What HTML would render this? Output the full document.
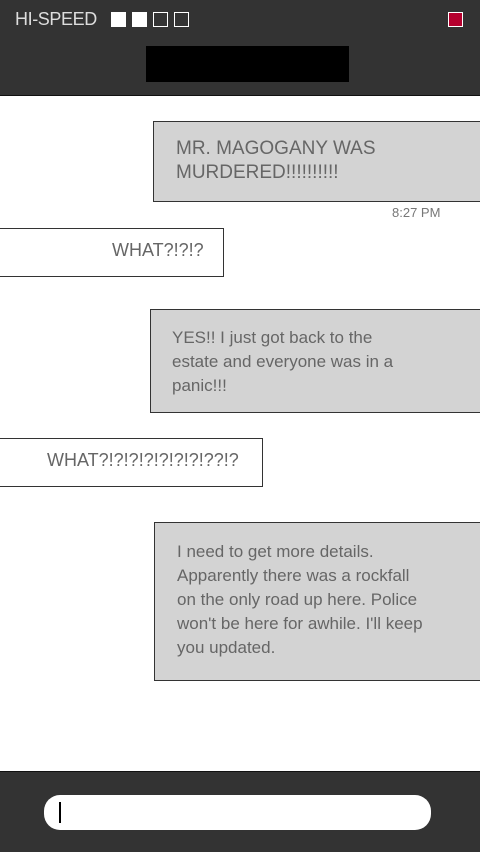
<!DOCTYPE html>
<html><head><style>
*{margin:0;padding:0;box-sizing:border-box}
body{width:480px;height:852px;background:#fff;position:relative;overflow:hidden;font-family:"Liberation Sans",sans-serif;color:#555}
.hdr{position:absolute;left:0;top:0;width:480px;height:96px;background:#333;border-bottom:1px solid #111}
.t{position:absolute;left:15px;top:9px;color:#ddd;font-size:18px;font-weight:normal;letter-spacing:-0.4px}
.sq{position:absolute;top:12px;width:15px;height:15px;border:1px solid #fff}
.f{background:#fff}
.red{position:absolute;left:448px;top:12px;width:15px;height:15px;background:#b5002e;border:1px solid #fff}
.blk{position:absolute;left:146px;top:46px;width:203px;height:36px;background:#000}
.b{position:absolute;border:1px solid #333;font-size:17px;line-height:24px;color:#666}
.g{background:#d3d3d3}
.w{background:#fff}
.ts{position:absolute;left:392px;top:205px;font-size:13px;color:#777}
.ftr{position:absolute;left:0;top:771px;width:480px;height:81px;background:#333;border-top:1px solid #111}
.in{position:absolute;left:44px;top:23px;width:387px;height:35px;background:#fff;border-radius:16px}
.cur{position:absolute;left:15px;top:7px;width:2px;height:21px;background:#000}
</style></head><body>
<div class="hdr">
<div class="t">HI-SPEED</div>
<div class="sq f" style="left:111px"></div>
<div class="sq f" style="left:132px"></div>
<div class="sq" style="left:153px"></div>
<div class="sq" style="left:174px"></div>
<div class="red"></div>
<div class="blk"></div>
</div>
<div class="b g" style="left:153px;top:121px;width:330px;height:81px;padding:15px 0 0 22px;font-size:19px">MR. MAGOGANY WAS<br>MURDERED!!!!!!!!!!</div>
<div class="ts">8:27 PM</div>
<div class="b w" style="left:-1px;top:228px;width:225px;height:49px;padding:9px 0 0 112px;font-size:18px">WHAT?!?!?</div>
<div class="b g" style="left:150px;top:309px;width:333px;height:104px;padding:16px 0 0 21px">YES!! I just got back to the<br>estate and everyone was in a<br>panic!!!</div>
<div class="b w" style="left:-1px;top:438px;width:264px;height:49px;padding:9px 0 0 47px;font-size:18px">WHAT?!?!?!?!?!?!?!??!?</div>
<div class="b g" style="left:154px;top:522px;width:329px;height:159px;padding:17px 0 0 22px">I need to get more details.<br>Apparently there was a rockfall<br>on the only road up here. Police<br>won't be here for awhile. I'll keep<br>you updated.</div>
<div class="ftr"><div class="in"><div class="cur"></div></div></div>
</body></html>
